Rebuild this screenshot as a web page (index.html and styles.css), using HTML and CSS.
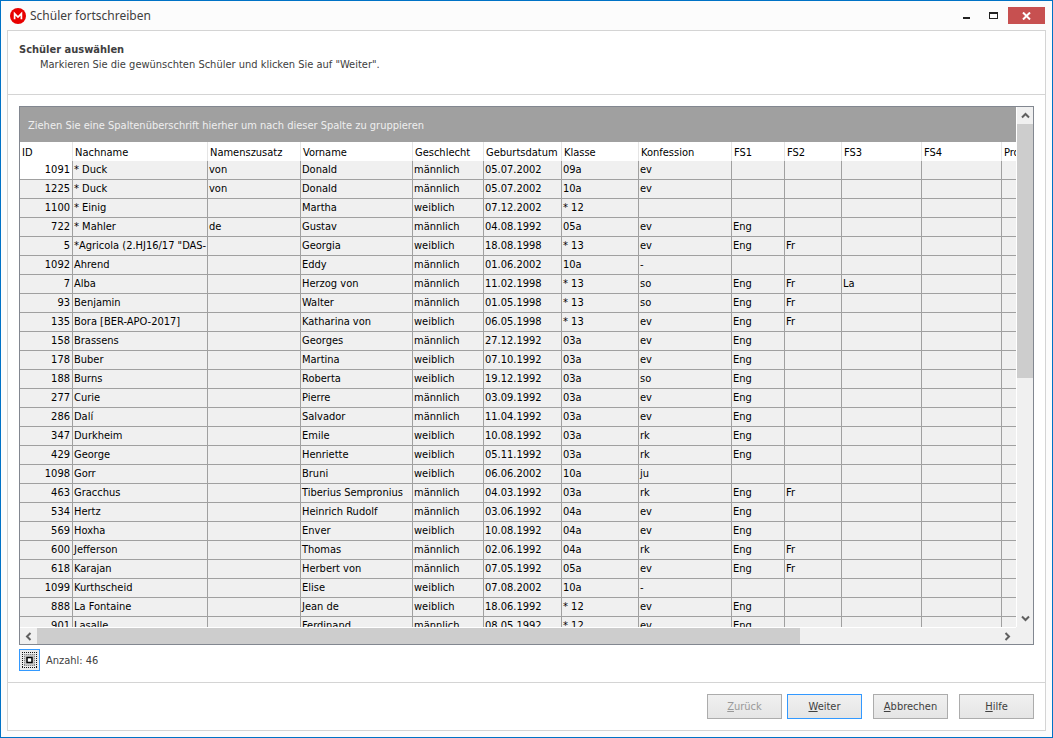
FILE: index.html
```html
<!DOCTYPE html>
<html lang="de">
<head>
<meta charset="utf-8">
<title>Schüler fortschreiben</title>
<link rel="stylesheet" href="styles.css">
</head>
<body>
<div class="window">
  <header class="titlebar">
    <svg class="logo" width="16" height="16" viewBox="0 0 16 16"><circle cx="8" cy="8" r="8" fill="#e80000"/><path d="M4.600 11.200V5.600L8 9l3.400-3.400v5.600" fill="none" stroke="#fff" stroke-width="1.700"/></svg>
    <h1 class="title">Schüler fortschreiben</h1>
    <div class="controls">
      <button class="control" aria-label="Minimieren"><svg width="9" height="9" viewBox="0 0 9 9"><path d="M1 6h7v2H1z" fill="#222"/></svg></button>
      <button class="control" aria-label="Maximieren"><svg width="9" height="9" viewBox="0 0 9 9"><path d="M0 1h9v7H0zM1 3v4h7V3z" fill="#222" fill-rule="evenodd"/></svg></button>
      <button class="control close" aria-label="Schließen"><svg width="9" height="8" viewBox="0 0 9 8"><path d="M1 .5l7 7M8 .5l-7 7" stroke="#fff" stroke-width="2"/></svg></button>
    </div>
  </header>
  <main class="panel">
    <section class="intro">
      <h2 class="heading">Schüler auswählen</h2>
      <p class="hint">Markieren Sie die gewünschten Schüler und klicken Sie auf "Weiter".</p>
    </section>
    <section class="content">
      <div class="grid">
        <div class="view">
          <div class="groupbar">Ziehen Sie eine Spaltenüberschrift hierher um nach dieser Spalte zu gruppieren</div>
          <div class="rows">
            <table class="table">
              <colgroup><col class="w53"><col class="w135"><col class="w93"><col class="w112"><col class="w71"><col class="w78"><col class="w77"><col class="w93"><col class="w53"><col class="w57"><col class="w80"><col class="w80"><col class="w80"></colgroup>
              <thead><tr><th>ID</th><th>Nachname</th><th>Namenszusatz</th><th>Vorname</th><th>Geschlecht</th><th>Geburtsdatum</th><th>Klasse</th><th>Konfession</th><th>FS1</th><th>FS2</th><th>FS3</th><th>FS4</th><th>Pro</th></tr></thead>
              <tbody>
                <tr><td class="focus">1091</td><td>* Duck</td><td>von</td><td>Donald</td><td>männlich</td><td>05.07.2002</td><td>09a</td><td>ev</td><td></td><td></td><td></td><td></td><td></td></tr>
                <tr><td>1225</td><td>* Duck</td><td>von</td><td>Donald</td><td>männlich</td><td>05.07.2002</td><td>10a</td><td>ev</td><td></td><td></td><td></td><td></td><td></td></tr>
                <tr><td>1100</td><td>* Einig</td><td></td><td>Martha</td><td>weiblich</td><td>07.12.2002</td><td>* 12</td><td></td><td></td><td></td><td></td><td></td><td></td></tr>
                <tr><td>722</td><td>* Mahler</td><td>de</td><td>Gustav</td><td>männlich</td><td>04.08.1992</td><td>05a</td><td>ev</td><td>Eng</td><td></td><td></td><td></td><td></td></tr>
                <tr><td>5</td><td>*Agricola (2.HJ16/17 "DAS-</td><td></td><td>Georgia</td><td>weiblich</td><td>18.08.1998</td><td>* 13</td><td>ev</td><td>Eng</td><td>Fr</td><td></td><td></td><td></td></tr>
                <tr><td>1092</td><td>Ahrend</td><td></td><td>Eddy</td><td>männlich</td><td>01.06.2002</td><td>10a</td><td>-</td><td></td><td></td><td></td><td></td><td></td></tr>
                <tr><td>7</td><td>Alba</td><td></td><td>Herzog von</td><td>männlich</td><td>11.02.1998</td><td>* 13</td><td>so</td><td>Eng</td><td>Fr</td><td>La</td><td></td><td></td></tr>
                <tr><td>93</td><td>Benjamin</td><td></td><td>Walter</td><td>männlich</td><td>01.05.1998</td><td>* 13</td><td>so</td><td>Eng</td><td>Fr</td><td></td><td></td><td></td></tr>
                <tr><td>135</td><td>Bora [BER-APO-2017]</td><td></td><td>Katharina von</td><td>weiblich</td><td>06.05.1998</td><td>* 13</td><td>ev</td><td>Eng</td><td>Fr</td><td></td><td></td><td></td></tr>
                <tr><td>158</td><td>Brassens</td><td></td><td>Georges</td><td>männlich</td><td>27.12.1992</td><td>03a</td><td>ev</td><td>Eng</td><td></td><td></td><td></td><td></td></tr>
                <tr><td>178</td><td>Buber</td><td></td><td>Martina</td><td>weiblich</td><td>07.10.1992</td><td>03a</td><td>ev</td><td>Eng</td><td></td><td></td><td></td><td></td></tr>
                <tr><td>188</td><td>Burns</td><td></td><td>Roberta</td><td>weiblich</td><td>19.12.1992</td><td>03a</td><td>so</td><td>Eng</td><td></td><td></td><td></td><td></td></tr>
                <tr><td>277</td><td>Curie</td><td></td><td>Pierre</td><td>männlich</td><td>03.09.1992</td><td>03a</td><td>ev</td><td>Eng</td><td></td><td></td><td></td><td></td></tr>
                <tr><td>286</td><td>Dalí</td><td></td><td>Salvador</td><td>männlich</td><td>11.04.1992</td><td>03a</td><td>ev</td><td>Eng</td><td></td><td></td><td></td><td></td></tr>
                <tr><td>347</td><td>Durkheim</td><td></td><td>Emile</td><td>weiblich</td><td>10.08.1992</td><td>03a</td><td>rk</td><td>Eng</td><td></td><td></td><td></td><td></td></tr>
                <tr><td>429</td><td>George</td><td></td><td>Henriette</td><td>weiblich</td><td>05.11.1992</td><td>03a</td><td>rk</td><td>Eng</td><td></td><td></td><td></td><td></td></tr>
                <tr><td>1098</td><td>Gorr</td><td></td><td>Bruni</td><td>weiblich</td><td>06.06.2002</td><td>10a</td><td>ju</td><td></td><td></td><td></td><td></td><td></td></tr>
                <tr><td>463</td><td>Gracchus</td><td></td><td>Tiberius Sempronius</td><td>männlich</td><td>04.03.1992</td><td>03a</td><td>rk</td><td>Eng</td><td>Fr</td><td></td><td></td><td></td></tr>
                <tr><td>534</td><td>Hertz</td><td></td><td>Heinrich Rudolf</td><td>männlich</td><td>03.06.1992</td><td>04a</td><td>ev</td><td>Eng</td><td></td><td></td><td></td><td></td></tr>
                <tr><td>569</td><td>Hoxha</td><td></td><td>Enver</td><td>weiblich</td><td>10.08.1992</td><td>04a</td><td>ev</td><td>Eng</td><td></td><td></td><td></td><td></td></tr>
                <tr><td>600</td><td>Jefferson</td><td></td><td>Thomas</td><td>männlich</td><td>02.06.1992</td><td>04a</td><td>rk</td><td>Eng</td><td>Fr</td><td></td><td></td><td></td></tr>
                <tr><td>618</td><td>Karajan</td><td></td><td>Herbert von</td><td>männlich</td><td>07.05.1992</td><td>05a</td><td>ev</td><td>Eng</td><td>Fr</td><td></td><td></td><td></td></tr>
                <tr><td>1099</td><td>Kurthscheid</td><td></td><td>Elise</td><td>weiblich</td><td>07.08.2002</td><td>10a</td><td>-</td><td></td><td></td><td></td><td></td><td></td></tr>
                <tr><td>888</td><td>La Fontaine</td><td></td><td>Jean de</td><td>weiblich</td><td>18.06.1992</td><td>* 12</td><td>ev</td><td>Eng</td><td></td><td></td><td></td><td></td></tr>
                <tr><td>901</td><td>Lasalle</td><td></td><td>Ferdinand</td><td>männlich</td><td>08.05.1992</td><td>* 12</td><td>ev</td><td>Eng</td><td></td><td></td><td></td><td></td></tr>
              </tbody>
            </table>
          </div>
        </div>
        <div class="vscroll">
          <button class="arrow" aria-label="Nach oben"><svg width="9" height="7" viewBox="0 0 9 7"><path d="M1 5.500L4.500 2 8 5.500"/></svg></button>
          <div class="vtrack"><div class="vthumb"></div></div>
          <button class="arrow" aria-label="Nach unten"><svg width="9" height="7" viewBox="0 0 9 7"><path d="M1 1.500L4.500 5 8 1.500"/></svg></button>
        </div>
        <div class="hscroll">
          <button class="arrow" aria-label="Nach links"><svg width="7" height="9" viewBox="0 0 7 9"><path d="M5.500 1L2 4.500 5.500 8"/></svg></button>
          <div class="htrack"><div class="hthumb"></div></div>
          <button class="arrow" aria-label="Nach rechts"><svg width="7" height="9" viewBox="0 0 7 9"><path d="M1.500 1L5 4.500 1.500 8"/></svg></button>
        </div>
        <div class="corner"></div>
      </div>
      <div class="status">
        <button class="selectall" aria-label="Alle markieren"><svg width="15" height="16" viewBox="0 0 15 16"><path d="M2 2h11v12H2z" fill="#c8c8c8"/><g fill="none" stroke="#111" stroke-dasharray="1 1"><path d="M0 .5h15M0 15.500h15M.5 0v16M14.500 0v16"/><path d="M2 2.500h11M2 13.500h11M2.500 2v12M12.500 2v12" stroke="#888"/></g><path d="M5 5.500h5v5H5z" fill="#fff" stroke="#000" stroke-width="1.500"/></svg></button>
        <span>Anzahl: 46</span>
      </div>
    </section>
    <footer class="footer">
      <button class="btn" disabled><u>Z</u>urück</button>
      <button class="btn primary"><u>W</u>eiter</button>
      <button class="btn apart"><u>A</u>bbrechen</button>
      <button class="btn apart"><u>H</u>ilfe</button>
    </footer>
  </main>
</div>
</body>
</html>
```
FILE: styles.css
```css
* { box-sizing: border-box; }
body { margin: 0; font: 11px/14px "DejaVu Sans Condensed", "DejaVu Sans", sans-serif; color: #404040; }
h1, h2, p { margin: 0; }
button { font: inherit; color: inherit; padding: 0; border: 0; background: none; display: flex; align-items: center; justify-content: center; }
svg { display: block; }

.window { height: 100vh; min-height: 320px; display: flex; flex-direction: column; border: 1px solid #0072c6; background: #fcfcfc; padding: 0 6px 6px; }

.titlebar { height: 29px; flex: none; display: flex; align-items: center; gap: 4px; padding: 0 1px 0 3px; }
.title { flex: 1; font: 12px/16px "Noto Sans", sans-serif; }
.controls { display: flex; align-items: center; }
.control { width: 27px; height: 17px; }
.control.close { width: 37px; background: #c75050; margin-left: 1px; }

.panel { flex: 1; min-height: 0; display: flex; flex-direction: column; background: #fff; border: 1px solid #d4d4d4; }
.intro { height: 64px; flex: none; padding: 11px 11px 0; border-bottom: 1px solid #d4d4d4; }
.heading { font-size: 11px; line-height: 15px; }
.hint { padding-left: 21px; line-height: 15px; }

.content { flex: 1; min-height: 0; display: flex; flex-direction: column; padding: 11px; }
.grid { flex: 1; min-height: 0; display: grid; grid-template: minmax(0, 1fr) 17px / minmax(0, 1fr) 17px; border: 1px solid #828790; }
.view { min-height: 0; overflow: hidden; display: flex; flex-direction: column; }
.groupbar { height: 35px; flex: none; background: #a0a0a0; color: #efefef; padding: 12px 8px 0; white-space: nowrap; }
.rows { flex: 1; min-height: 0; overflow: hidden; background: #fff; }

.table { table-layout: fixed; border-collapse: separate; border-spacing: 0; width: 1062px; color: #000; }
.w53 { width: 53px; } .w57 { width: 57px; } .w71 { width: 71px; } .w77 { width: 77px; } .w78 { width: 78px; }
.w80 { width: 80px; } .w93 { width: 93px; } .w112 { width: 112px; } .w135 { width: 135px; }
.table th { height: 19px; padding: 2px 0 0 2px; font-weight: normal; text-align: left; line-height: 16px; border-right: 1px solid #e5e5e5; white-space: nowrap; overflow: hidden; }
.table td { height: 19px; padding: 0 1px; line-height: 18px; background: #f0f0f0; border-right: 1px solid #a0a0a0; border-bottom: 1px solid #a0a0a0; white-space: nowrap; overflow: hidden; }
.table td:first-child { text-align: right; padding-right: 2px; }
.table .focus { background: #fff; }

.arrow { flex: none; width: 17px; height: 17px; }
.arrow path { fill: none; stroke: #606060; stroke-width: 2; }
.vscroll { display: flex; flex-direction: column; background: #f0f0f0; border-left: 1px solid #fff; }
.vscroll .arrow { width: 16px; }
.vtrack { flex: 1; }
.vthumb { height: 52.3%; background: #cdcdcd; }
.hscroll { display: flex; background: #f0f0f0; border-top: 1px solid #fff; }
.hscroll .arrow { height: 16px; }
.htrack { flex: 1; }
.hthumb { width: 79.3%; height: 100%; background: #cdcdcd; }
.corner { background: #f0f0f0; }

.status { flex: none; display: flex; align-items: center; gap: 6px; margin-top: 4px; }
.status span { padding-top: 1px; }
.selectall { width: 21px; height: 22px; border: 1px solid #3399ff; background: #ebebeb; }

.footer { height: 48px; flex: none; display: flex; align-items: flex-start; justify-content: flex-end; gap: 5px; padding: 11px 11px 0; border-top: 1px solid #d4d4d4; }
.btn { display: block; width: 75px; height: 25px; padding-top: 1px; border: 1px solid #acacac; background: linear-gradient(#f0f0f0, #e5e5e5); }
.btn.primary { border: 1px solid #3399ff; }
.btn.apart { margin-left: 6px; }
.btn:disabled { color: #999; }
```
